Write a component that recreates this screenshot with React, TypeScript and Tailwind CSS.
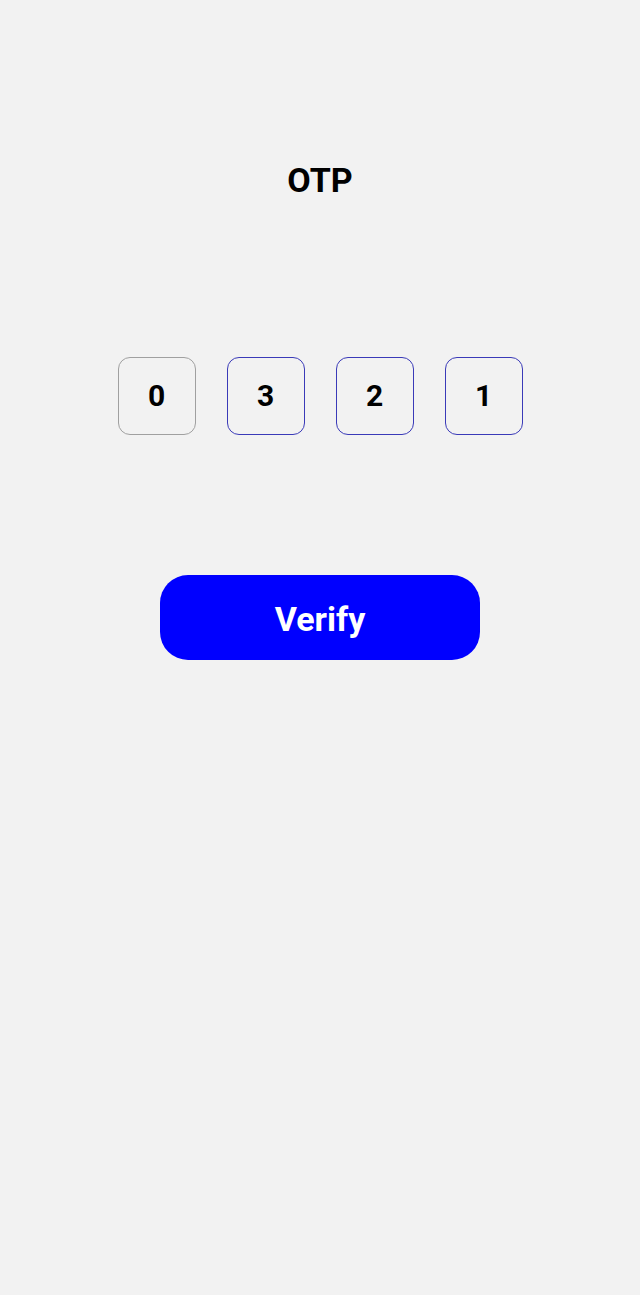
import { useState } from "react";

export default function App() {
  const [digits] = useState(["0", "3", "2", "1"]);

  return (
    <div className="min-h-[1295px] bg-[#f2f2f2] flex flex-col items-center font-['Roboto',sans-serif]">
      <h1 className="mt-[157px] text-[34px] leading-[46px] font-bold text-black">OTP</h1>

      <div className="mt-[154px] flex gap-[31px]">
        {digits.map((d, i) => (
          <div
            key={i}
            className={`w-[78px] h-[78px] rounded-[12px] border flex items-center justify-center text-[30px] font-bold text-black pb-[2px] ${
              i === 0 ? "border-[#a0a0a0]" : "border-[#3a3ab8]"
            }`}
          >
            {d}
          </div>
        ))}
      </div>

      <button className="mt-[140px] w-[320px] h-[85px] rounded-[28px] bg-[#0000ff] text-white text-[34px] font-bold pt-[4px]">
        Verify
      </button>
    </div>
  );
}
